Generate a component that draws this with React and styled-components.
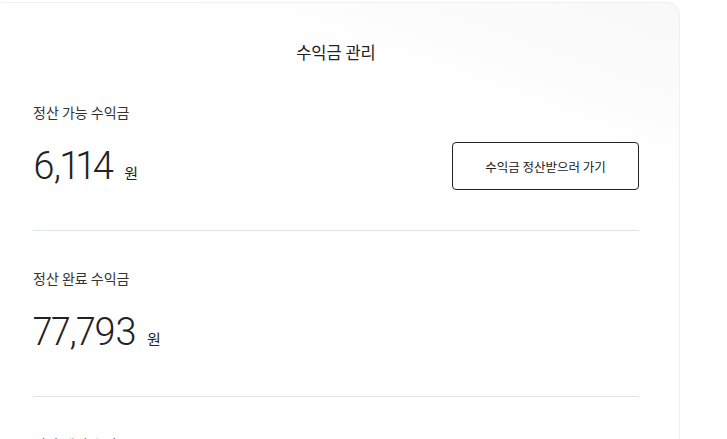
import React from "react";
import styled, { createGlobalStyle } from "styled-components";

const GlobalStyle = createGlobalStyle`
	body {
		margin: 0;
		background: #ffffff;
		font-family: "Noto Sans CJK KR", "Noto Sans", sans-serif;
		color: #222;
		overflow: hidden;
	}
`;

const earnings = [
	{ label: "정산 가능 수익금", amount: 6114, withButton: true },
	{ label: "정산 완료 수익금", amount: 77793 },
	{ label: "정산 예정 수익금", amount: 0 },
];

const App = () => {
	return (
		<>
			<GlobalStyle />
			<Page>
				<Card>
					<Title>수익금 관리</Title>
					{earnings.map((item) => (
						<Section key={item.label}>
							<Label>{item.label}</Label>
							<AmountRow>
								<Amount>
									<Number>{item.amount.toLocaleString("en-US")}</Number>
									<Unit>원</Unit>
								</Amount>
								{item.withButton && <OutlineButton>수익금 정산받으러 가기</OutlineButton>}
							</AmountRow>
						</Section>
					))}
				</Card>
			</Page>
		</>
	);
};

const Page = styled.div`
	padding-top: 2px;
	height: 100vh;
	box-sizing: border-box;
`;

const Card = styled.div`
	width: 688px;
	margin-left: -8px;
	box-sizing: border-box;
	padding: 38px 40px 0;
	border: 1px solid #f0f0f0;
	border-radius: 12px;
	background: linear-gradient(200deg, #f8f8f8 0%, #ffffff 24%);
	min-height: 500px;
`;

const Title = styled.h2`
	margin: 0 0 2px;
	text-align: center;
	font-size: 16.5px;
	line-height: 22px;
	font-weight: 400;
	color: #222;
`;

const Section = styled.div`
	padding: 38px 0 40px;
	border-bottom: 1px solid #dfe4e4;
`;

const Label = styled.div`
	font-size: 14px;
	line-height: 18px;
	color: #333;
	margin-bottom: 21px;
`;

const AmountRow = styled.div`
	display: flex;
	align-items: center;
	justify-content: space-between;
	height: 48px;
`;

const Amount = styled.div`
	display: flex;
	align-items: baseline;
	gap: 11px;
`;

const Number = styled.span`
	font-family: Roboto, "Noto Sans", sans-serif;
	font-weight: 300;
	font-size: 38px;
	line-height: 48px;
	letter-spacing: -0.6px;
	font-variant-numeric: proportional-nums;
	color: #222;
`;

const Unit = styled.span`
	font-size: 15px;
	color: #222;
`;

const OutlineButton = styled.button`
	width: 187px;
	height: 48px;
	border: 1px solid #222;
	border-radius: 4px;
	background: #fff;
	font-family: "Noto Sans CJK KR", sans-serif;
	font-size: 12.5px;
	color: #222;
	cursor: pointer;
`;

export default App;
